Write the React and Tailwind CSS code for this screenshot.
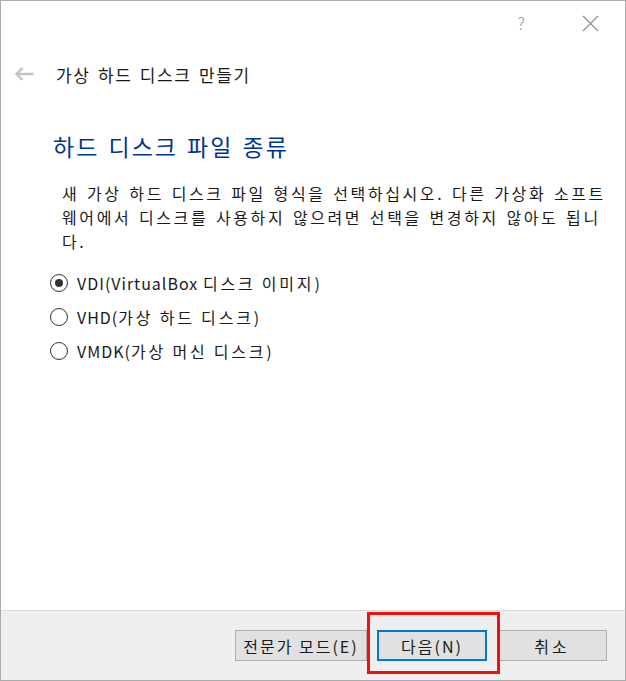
import { useState } from 'react';

const FONT = { fontFamily: '"Noto Sans CJK KR", "Noto Sans", sans-serif' };

const options = [
  { id: 'vdi', latin: 'VDI(VirtualBox ', hangul: '디스크 이미지)' },
  { id: 'vhd', latin: 'VHD(', hangul: '가상 하드 디스크)' },
  { id: 'vmdk', latin: 'VMDK(', hangul: '가상 머신 디스크)' },
];

const Radio = ({ checked }) => (
  <span className="w-[18px] h-[18px] rounded-full border border-[#333] bg-white flex items-center justify-center shrink-0">
    {checked && <span className="w-[8px] h-[8px] rounded-full bg-[#333]" />}
  </span>
);

const App = () => {
  const [selected, setSelected] = useState('vdi');

  return (
    <div className="relative w-[626px] h-[681px] border border-[#ababab] bg-white flex flex-col text-[#1a1a1a]" style={FONT}>
      {/* title bar */}
      <div className="h-[45px] flex items-center justify-end shrink-0">
        <span className="text-[17px] text-[#9a9a9a] font-light mr-[57px] -mt-[1px]">?</span>
        <svg width="17" height="17" viewBox="0 0 17 17" className="mr-[26px]">
          <path d="M1 1 L16 16 M16 1 L1 16" stroke="#8a8a8a" strokeWidth="1.1" fill="none" />
        </svg>
      </div>

      {/* header */}
      <div className="h-[56px] flex items-center pl-[13px] shrink-0">
        <svg width="20" height="16" viewBox="0 0 20 16">
          <path d="M19.5 8 H2.5 M8.5 2 L2.5 8 L8.5 14" stroke="#c2c2c2" strokeWidth="2.4" fill="none" />
        </svg>
        <span className="ml-[22px] text-[17px] leading-none tracking-[1.6px] [word-spacing:2px]">가상 하드 디스크 만들기</span>
      </div>

      <div className="pl-[52px] pr-[10px]">
        <h1 className="mt-[28px] h-[32px] leading-[32px] text-[23px] text-[#003399] tracking-[2px] [word-spacing:2px]">하드 디스크 파일 종류</h1>

        <p className="mt-[19px] pl-[9px] text-[16px] leading-[24px] whitespace-nowrap tracking-[2.6px] [word-spacing:1.5px]">
          새 가상 하드 디스크 파일 형식을 선택하십시오. 다른 가상화 소프트
          <br />
          웨어에서 디스크를 사용하지 않으려면 선택을 변경하지 않아도 됩니
          <br />
          다.
        </p>

        <div className="mt-[13px] flex flex-col">
          {options.map((o) => (
            <label
              key={o.id}
              className="h-[34px] flex items-center gap-[9px] -ml-[3px] cursor-default"
              onClick={() => setSelected(o.id)}
            >
              <Radio checked={selected === o.id} />
              <span className="text-[16px] whitespace-pre">
                <span className="tracking-[1px]">{o.latin}</span>
                <span className="tracking-[2.8px]">{o.hangul}</span>
              </span>
            </label>
          ))}
        </div>
      </div>

      <div className="flex-1" />

      {/* footer */}
      <div className="h-[70px] shrink-0 bg-[#efefef] border-t border-[#dcdcdc] flex justify-end items-start pt-[19px] pr-[18px] gap-[10px]">
        <button className="w-[132px] h-[31px] bg-[#e1e1e1] border border-[#adadad] text-[16px] tracking-[2px]">전문가 모드(E)</button>
        <button className="w-[110px] h-[31px] bg-[#e1e1e1] border-2 border-[#0078d7] text-[16px] tracking-[2px]">다음(N)</button>
        <button className="w-[110px] h-[31px] bg-[#e1e1e1] border border-[#adadad] text-[16px] tracking-[3px]">취소</button>
      </div>

      {/* annotation */}
      <div className="absolute left-[366px] top-[611px] w-[133px] h-[62px] border-[3px] border-[#ee1111] pointer-events-none" />
    </div>
  );
};

export default App;
